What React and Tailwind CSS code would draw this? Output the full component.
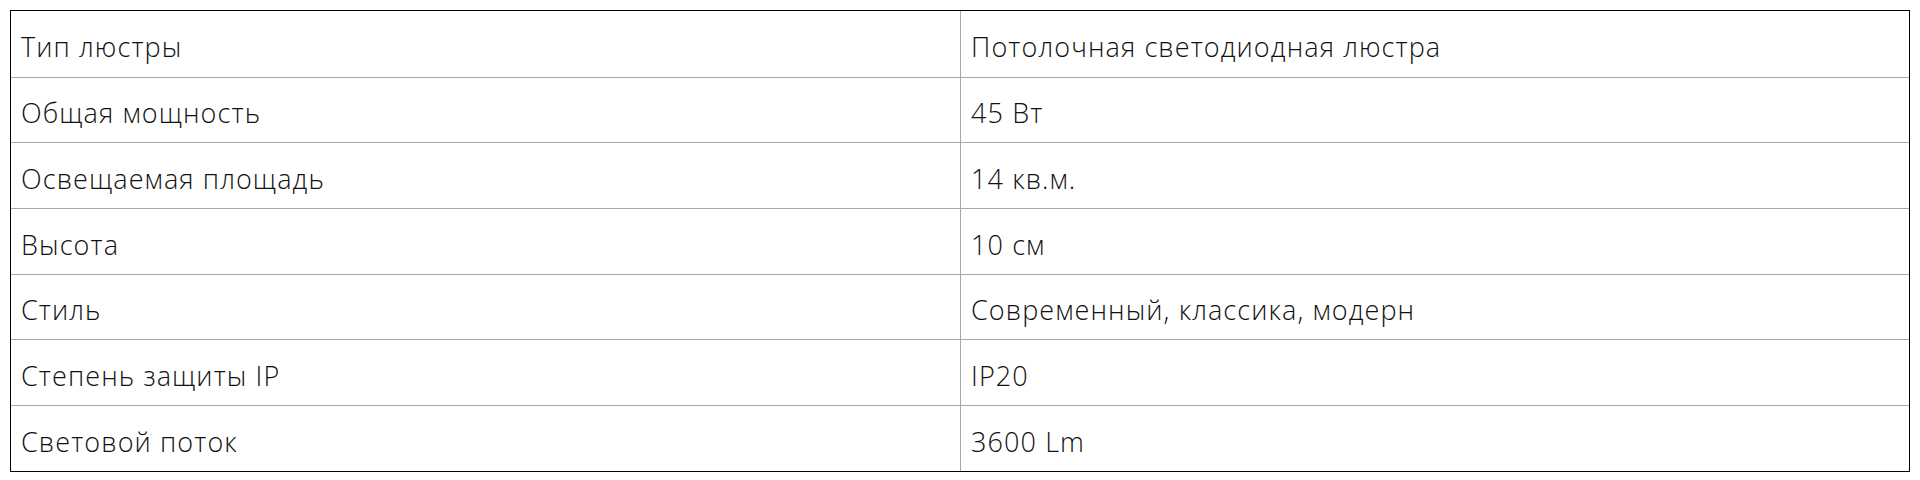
const ROWS = [
  ["Тип люстры", "Потолочная светодиодная люстра"],
  ["Общая мощность", "45 Вт"],
  ["Освещаемая площадь", "14 кв.м."],
  ["Высота", "10 см"],
  ["Стиль", "Современный, классика, модерн"],
  ["Степень защиты IP", "IP20"],
  ["Световой поток", "3600 Lm"],
];

export default function App() {
  return (
    <div className="w-[1920px] h-[480px] bg-white p-[10px] font-['Open_Sans','Noto_Sans',sans-serif] font-[350] text-[27px] tracking-[1.1px] text-[#111]">
      <div className="w-[1900px] border border-black">
        {ROWS.map(([label, value], i) => (
          <div
            key={label}
            className={`grid grid-cols-2 h-[65.7px] ${i > 0 ? "border-t border-[#a8a8a8]" : ""}`}
          >
            <div className="flex items-center pl-[10px] pt-[7px]">{label}</div>
            <div className="flex items-center pl-[10px] pt-[7px] border-l border-[#a8a8a8]">{value}</div>
          </div>
        ))}
      </div>
    </div>
  );
}
